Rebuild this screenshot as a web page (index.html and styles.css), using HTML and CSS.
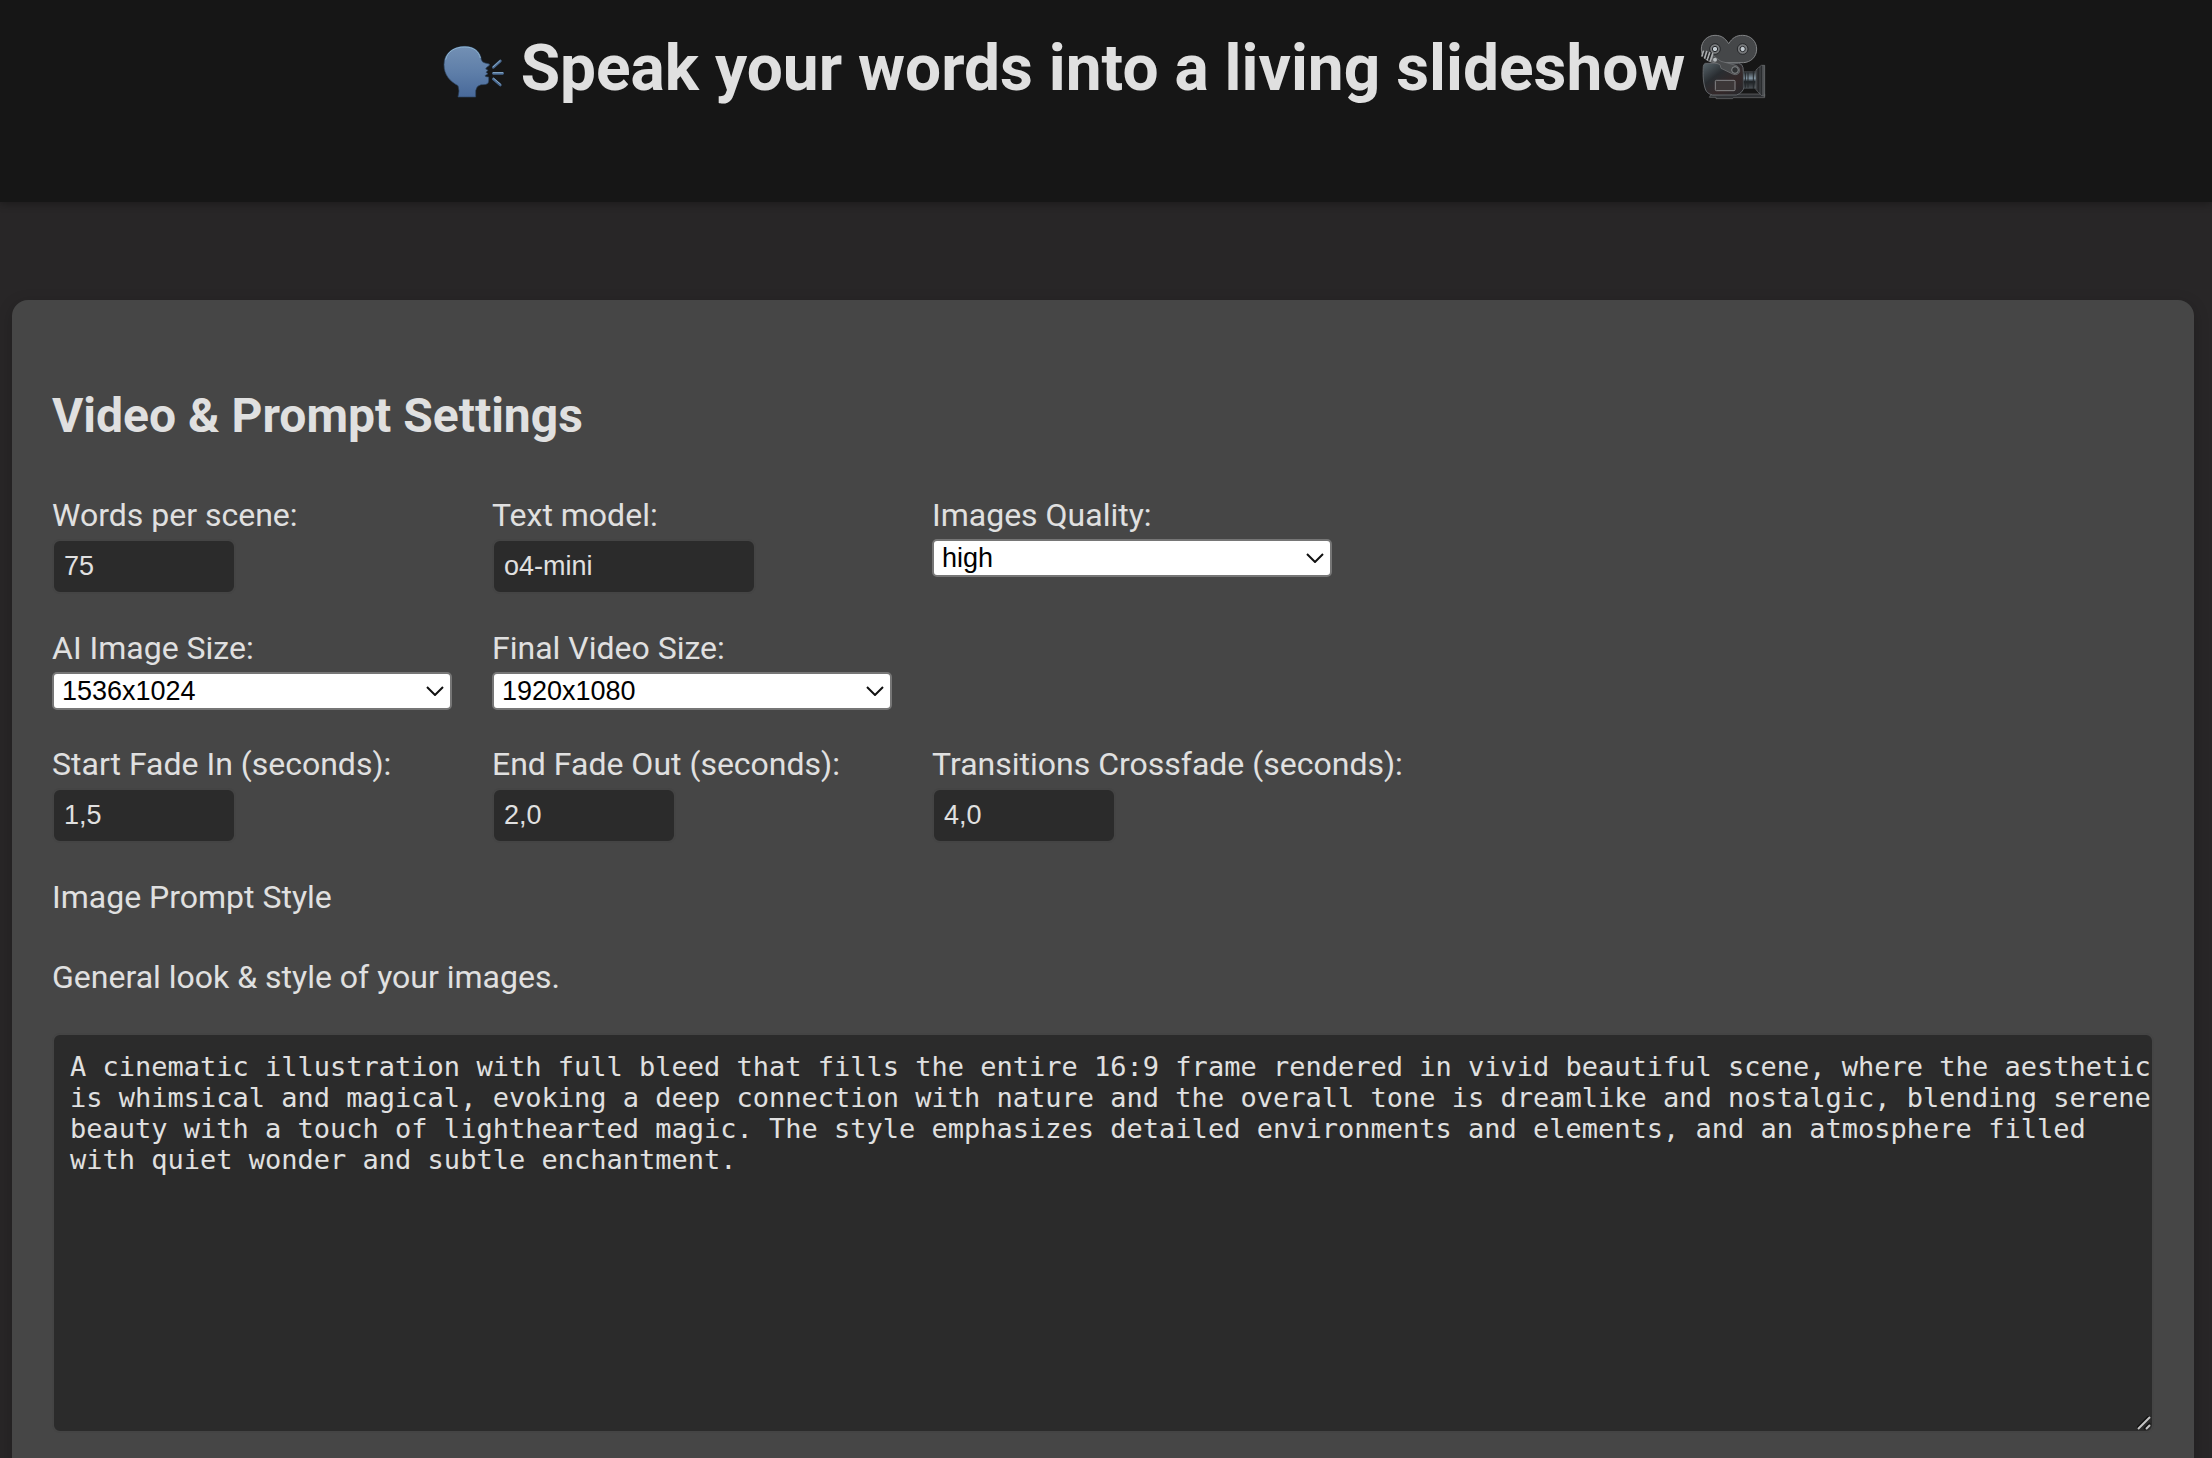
FILE: index.html
```html
<!DOCTYPE html>
<html lang="en">
<head>
<meta charset="utf-8">
<title>Speak your words into a living slideshow</title>
<link rel="stylesheet" href="styles.css">
</head>
<body>
<header class="header">
  <h1 class="title">
    <svg class="icon-speak" viewBox="36 72 192 168" aria-hidden="true">
      <defs>
        <linearGradient id="head" x1="0" y1="0" x2="0" y2="1">
          <stop offset="0" stop-color="#7390b4"/>
          <stop offset=".5" stop-color="#5f7fa9"/>
          <stop offset="1" stop-color="#48699a"/>
        </linearGradient>
      </defs>
      <path d="M84 231 Q90 212 84 197 C60 184 42 165 42 134 C42 99 70 79 104 79 C135 79 151 96 154 119 Q156 127 165 129 L178 132 Q181 136 170 142 L167 147 L174 151 L168 157 L174 161 L165 167 Q165 171 176 171 Q177 184 174 190 Q170 195 153 194 Q139 197 137 212 L137 231 Z" fill="url(#head)" stroke="#2f4764" stroke-width="2"/>
      <path d="M47 119 C52 94 75 81 104 81 C132 81 146 94 151 114" fill="none" stroke="#8eb4d0" stroke-width="3"/>
      <g fill="none" stroke-linecap="round">
        <path d="M190 142 L211 123 M190 160 H218 M190 177 L211 195" stroke="#4a6a92" stroke-width="8"/>
        <path d="M190 140 L210 122 M190 158 H218 M191 175 L211 192" stroke="#88aac6" stroke-width="3"/>
      </g>
    </svg>
    <span>Speak your words into a living slideshow</span>
    <svg class="icon-camera" viewBox="120 39 198 198" aria-hidden="true">
      <defs>
        <linearGradient id="body" x1="0" y1="0" x2="1" y2="1">
          <stop offset="0" stop-color="#59666c"/>
          <stop offset=".35" stop-color="#292d31"/>
          <stop offset=".65" stop-color="#35292a"/>
          <stop offset="1" stop-color="#24272b"/>
        </linearGradient>
        <linearGradient id="lens" x1="0" y1="0" x2="0" y2="1">
          <stop offset="0" stop-color="#2a2d30"/>
          <stop offset=".4" stop-color="#8497a5"/>
          <stop offset=".6" stop-color="#1c2023"/>
          <stop offset="1" stop-color="#4c5155"/>
        </linearGradient>
        <linearGradient id="hood" x1="0" y1="0" x2="1" y2="0">
          <stop offset="0" stop-color="#25272a"/>
          <stop offset="1" stop-color="#55585b"/>
        </linearGradient>
      </defs>
      <path d="M165 43 C184 43 195 51 206 68 C217 51 228 43 248 43 C273 43 290 62 290 84 C290 108 272 124 250 125 L166 125 C140 124 124 106 124 84 C124 61 142 43 165 43 Z" fill="#454749" stroke="#818385" stroke-width="3"/>
      <g stroke="#25272a" stroke-width="3">
        <circle cx="165" cy="84" r="16" fill="#77797b"/>
        <circle cx="248" cy="84" r="16" fill="#77797b"/>
        <circle cx="165" cy="84" r="8" fill="#c3cbd1"/>
        <circle cx="248" cy="84" r="8" fill="#c3cbd1"/>
      </g>
      <path d="M152 222 L246 219 H314 V230 H220 L218 233 H168 V229 H148 Z" fill="#303235" stroke="#6c6e70" stroke-width="2"/>
      <path d="M136 127 H236 Q247 128 249 140 L253 196 Q249 216 229 222 H158 Q140 218 136 204 C128 180 129 155 130 136 Q131 129 136 127 Z" fill="url(#body)" stroke="#62666a" stroke-width="3"/>
      <rect x="250" y="152" width="39" height="50" rx="3" fill="url(#lens)" stroke="#4c5054" stroke-width="2"/>
      <path d="M256 155 V200 M264 155 V200 M280 149 V204" stroke="#24282b" stroke-width="3"/>
      <path d="M288 147 L304 133 H314 V226 L304 223 L288 206 Z" fill="url(#hood)" stroke="#707376" stroke-width="2"/>
      <path d="M304 134 V222 M296 141 V213" stroke="#252729" stroke-width="3"/>
      <path d="M158 103 L183 121 L225 132 Q240 137 239 151 Q235 164 220 160 L183 142 L180 131 L157 122 Z" fill="#494b4d" stroke="#77797b" stroke-width="2"/>
      <circle cx="225" cy="147" r="10" fill="#303234" stroke="#85888a" stroke-width="3"/>
      <path d="M130 91 L126 105 M140 92 L134 111 M149 95 L142 116 M158 98 L151 120" stroke="#a9acae" stroke-width="5" stroke-linecap="round"/>
      <path d="M134 92 L130 108 M144 94 L138 114 M153 97 L146 118" stroke="#1d1f21" stroke-width="3"/>
      <circle cx="165" cy="116" r="6" fill="#b5babd"/>
      <rect x="166" y="178" width="59" height="31" rx="3" fill="#3c3738" stroke="#858587" stroke-width="3"/>
    </svg>
  </h1>
</header>

<main class="card">
  <h2 class="heading">Video &amp; Prompt Settings</h2>
  <form class="form">
    <div class="row">
      <div class="field">
        <label for="words">Words per scene:</label>
        <input id="words" class="input" type="text" inputmode="numeric" value="75">
      </div>
      <div class="field">
        <label for="model">Text model:</label>
        <input id="model" class="input input-wide" type="text" value="o4-mini">
      </div>
      <div class="field">
        <label for="quality">Images Quality:</label>
        <div class="select-wrap">
          <select id="quality" class="select"><option>high</option></select>
          <svg class="chevron" viewBox="0 0 18 10" aria-hidden="true"><path d="M1 1 L9 9 L17 1"/></svg>
        </div>
      </div>
    </div>
    <div class="row">
      <div class="field">
        <label for="image-size">AI Image Size:</label>
        <div class="select-wrap">
          <select id="image-size" class="select"><option>1536x1024</option></select>
          <svg class="chevron" viewBox="0 0 18 10" aria-hidden="true"><path d="M1 1 L9 9 L17 1"/></svg>
        </div>
      </div>
      <div class="field">
        <label for="video-size">Final Video Size:</label>
        <div class="select-wrap">
          <select id="video-size" class="select"><option>1920x1080</option></select>
          <svg class="chevron" viewBox="0 0 18 10" aria-hidden="true"><path d="M1 1 L9 9 L17 1"/></svg>
        </div>
      </div>
    </div>
    <div class="row">
      <div class="field">
        <label for="fade-in">Start Fade In (seconds):</label>
        <input id="fade-in" class="input" type="text" inputmode="decimal" value="1,5">
      </div>
      <div class="field">
        <label for="fade-out">End Fade Out (seconds):</label>
        <input id="fade-out" class="input" type="text" inputmode="decimal" value="2,0">
      </div>
      <div class="field">
        <label for="crossfade">Transitions Crossfade (seconds):</label>
        <input id="crossfade" class="input" type="text" inputmode="decimal" value="4,0">
      </div>
    </div>
    <div class="prompt">
      <label for="style">Image Prompt Style</label>
      <p class="hint">General look &amp; style of your images.</p>
      <div class="textarea-wrap">
        <textarea id="style" class="textarea" spellcheck="false">A cinematic illustration with full bleed that fills the entire 16:9 frame rendered in vivid beautiful scene, where the aesthetic is whimsical and magical, evoking a deep connection with nature and the overall tone is dreamlike and nostalgic, blending serene beauty with a touch of lighthearted magic. The style emphasizes detailed environments and elements, and an atmosphere filled with quiet wonder and subtle enchantment.</textarea>
        <svg class="grip" viewBox="0 0 14 14" aria-hidden="true">
          <path d="M0 12 L12 0 M7 13 L13 7" stroke="#111"/>
          <path d="M1 13 L13 1 M9 13 L13 9" stroke="#c4c4c4"/>
        </svg>
      </div>
    </div>
  </form>
</main>
</body>
</html>
```
FILE: styles.css
```css
* {
  box-sizing: border-box;
}

body {
  margin: 0;
  background: #282627;
  color: #e0e0e0;
  font-family: Roboto, "Liberation Sans", sans-serif;
  font-size: 32px;
  line-height: 38px;
}

.header {
  padding: 31px 24px 95px 20px;
  background: #161616;
  box-shadow: 0 2px 8px rgba(0, 0, 0, 0.3);
}

.title {
  display: flex;
  justify-content: center;
  align-items: center;
  gap: 15px;
  margin: 0;
  font-size: 64px;
  font-weight: 700;
  line-height: 76px;
}

.icon-speak {
  flex: none;
  width: 64px;
  height: 56px;
  margin-top: 6px;
}

.icon-camera {
  flex: none;
  width: 66px;
  height: 66px;
  margin-bottom: 4px;
}

.card {
  margin: 98px 18px 0 12px;
  padding: 88px 40px 40px;
  border-radius: 16px;
  background: #464646;
  box-shadow: 0 4px 16px rgba(0, 0, 0, 0.2);
}

.heading {
  margin: 0 0 52px;
  font-size: 48px;
  font-weight: 700;
  line-height: 56px;
}

.form {
  display: flex;
  flex-direction: column;
  gap: 35px;
}

.row {
  display: flex;
  gap: 40px;
}

.field {
  display: flex;
  flex-direction: column;
  align-items: flex-start;
  gap: 5px;
  width: 400px;
  white-space: nowrap;
}

.field:last-child {
  width: auto;
  min-width: 400px;
}

.input {
  width: 184px;
  height: 55px;
  padding: 0 10px;
  border: 2px solid #444;
  border-radius: 8px;
  background: #2b2b2b;
  color: #e0e0e0;
  font-family: "Liberation Sans", Arial, sans-serif;
  font-size: 27px;
}

.input-wide {
  width: 264px;
}

.select-wrap {
  display: grid;
  align-items: center;
  width: 400px;
}

.select {
  grid-area: 1 / 1;
  height: 38px;
  padding: 0 32px 0 8px;
  border: 2px solid #767676;
  border-radius: 5px;
  background: #fff;
  color: #000;
  font-family: "Liberation Sans", Arial, sans-serif;
  font-size: 27px;
  line-height: 32px;
  appearance: none;
}

.chevron {
  grid-area: 1 / 1;
  justify-self: end;
  width: 18px;
  height: 10px;
  margin-right: 8px;
  fill: none;
  stroke: #111;
  stroke-width: 2;
  pointer-events: none;
}

.prompt {
  display: flex;
  flex-direction: column;
}

.hint {
  margin: 42px 0 37px;
}

.textarea-wrap {
  display: grid;
}

.textarea {
  grid-area: 1 / 1;
  width: 100%;
  height: 400px;
  padding: 16px 0 16px 16px;
  border: 2px solid #444;
  border-radius: 8px;
  background: #2b2b2b;
  color: #e0e0e0;
  font-family: "DejaVu Sans Mono", monospace;
  font-size: 27px;
  line-height: 31px;
  resize: vertical;
}

.textarea::-webkit-resizer {
  background: transparent;
}

.grip {
  grid-area: 1 / 1;
  align-self: end;
  justify-self: end;
  width: 14px;
  height: 14px;
  margin: 0 3px 3px 0;
  fill: none;
  stroke-width: 2;
  pointer-events: none;
}
```
